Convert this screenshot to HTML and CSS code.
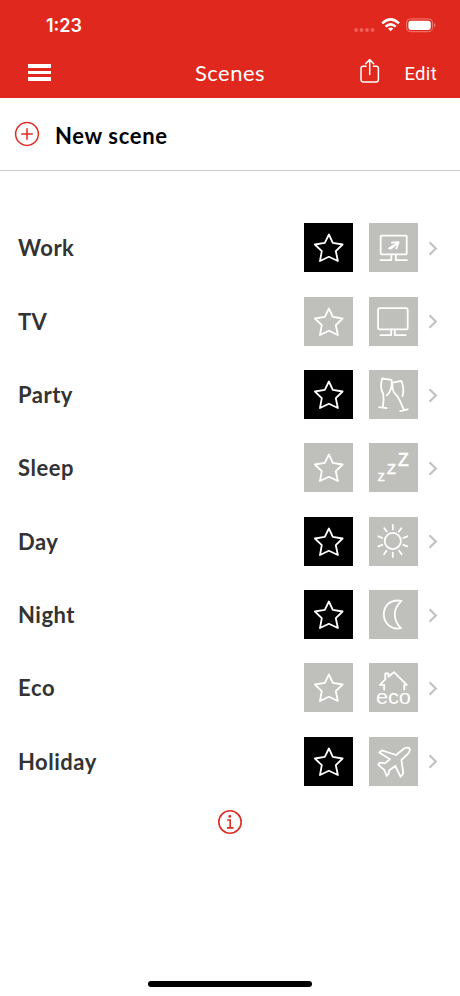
FILE: index.html
```
<!DOCTYPE html>
<html lang="en">
<head>
<meta charset="utf-8">
<title>Scenes</title>
<link rel="stylesheet" href="styles.css">
</head>
<body>
<svg class="defs" width="0" height="0" aria-hidden="true">
  <symbol id="star" viewBox="0 0 49 49"><path d="M24.9 11.5 28.8 19.9 38.6 21.5 31.8 28.2 33.9 38 24.9 33.8 16 38 17.8 28.2 10.9 21.5 20.8 19.9Z"/></symbol>
  <symbol id="chevron" viewBox="0 0 10 16"><path d="M1.5 2.3 7.8 8.5 1.5 14.7"/></symbol>
</svg>
<div class="screen">
  <header class="header">
    <div class="status">
      <span class="time">1:23</span>
      <svg class="signals" width="84" height="18" viewBox="0 0 84 18">
        <g fill="#f0605a"><circle cx="4" cy="14" r="1.9"/><circle cx="9.5" cy="14" r="1.9"/><circle cx="15" cy="14" r="1.9"/><circle cx="20.5" cy="14" r="1.9"/></g>
        <g fill="none" stroke="#fff" stroke-width="2.5"><path d="M30.2 7.3Q38.6-.5 47 7.3"/><path d="M33.5 10.6Q38.6 6.1 43.7 10.6"/></g>
        <path fill="#fff" d="M36 12.5Q38.6 10.4 41.3 12.5L38.6 15.3Z"/>
        <rect x="54.6" y="2.9" width="26" height="12.8" rx="4" fill="none" stroke="#f27d76"/>
        <rect x="56.4" y="4.7" width="22.4" height="9.2" rx="2.4" fill="#fff"/>
        <path d="M82 7.1Q84.6 9.3 82 11.5Z" fill="#f27d76"/>
      </svg>
    </div>
    <nav class="nav">
      <span class="menu"><i></i><i></i><i></i></span>
      <h1>Scenes</h1>
      <div class="actions">
        <svg width="22" height="26" viewBox="0 0 22 26"><path d="M7 8.3H4.2Q2 8.3 2 10.5V21.6Q2 24 4.4 24H17.2Q19.4 24 19.4 21.6V10.5Q19.4 8.3 17.2 8.3H14.4M10.7 16.6V2M6.7 5.7 10.7 1.6 14.7 5.7"/></svg>
        <span class="edit">Edit</span>
      </div>
    </nav>
  </header>
  <div class="new-scene">
    <svg width="26" height="26" viewBox="0 0 26 26"><circle cx="13" cy="13" r="11.4"/><path d="M13 7.2V18.8M7.2 13H18.8"/></svg>
    <span>New scene</span>
  </div>
  <main class="list">
    <div class="row"><span class="name">Work</span>
      <svg class="tile on"><use href="#star"/></svg>
      <svg class="tile" viewBox="0 0 49 49"><rect x="11.7" y="12.6" width="26" height="18.7" rx="1"/><path d="M11.3 37.1H22.3V31.3M38 37.1H26.8V31.3M22.9 19.6 29.6 19.2 27.4 25.5M20 25.6 28.6 20M22 25.6 28.6 20"/></svg>
      <svg class="chevron"><use href="#chevron"/></svg></div>
    <div class="row"><span class="name tv">TV</span>
      <svg class="tile"><use href="#star"/></svg>
      <svg class="tile" viewBox="0 0 49 49"><rect x="9.1" y="11.2" width="29.6" height="21.2" rx="1.5"/><path d="M11.4 38.1H22.2V32.4M36.8 38.1H25.8V32.4"/></svg>
      <svg class="chevron"><use href="#chevron"/></svg></div>
    <div class="row"><span class="name">Party</span>
      <svg class="tile on"><use href="#star"/></svg>
      <svg class="tile" viewBox="0 0 49 49"><path d="M13.2 8.5 22.6 9.8Q23.8 19.5 17.8 25.4M13.2 8.5C11.6 14 11.1 19 14.2 23.8Q15.2 30 13.8 37.4M10.1 37.1 17.7 38.2M23.3 12.6 32.4 10.8Q35.8 20 33.4 26.2M23.3 12.6Q23 21 26.7 24.5C30.3 27.2 32.2 34.5 35.2 40.2M31.2 41.2 38.7 39.3"/></svg>
      <svg class="chevron"><use href="#chevron"/></svg></div>
    <div class="row"><span class="name">Sleep</span>
      <svg class="tile"><use href="#star"/></svg>
      <svg class="tile letters" viewBox="0 0 49 49"><text x="8.8" y="37.6" font-size="11.3">Z</text><text x="17.9" y="30.5" font-size="14.5">Z</text><text x="28.9" y="23.1" font-size="17.5">Z</text></svg>
      <svg class="chevron"><use href="#chevron"/></svg></div>
    <div class="row"><span class="name">Day</span>
      <svg class="tile on"><use href="#star"/></svg>
      <svg class="tile" viewBox="0 0 49 49"><circle cx="23.8" cy="24" r="8.1"/><path d="M23.8 8V12.3M23.8 35.7V40M15.3 11.2 17.7 14.6M32.3 11.2 29.9 14.6M9.3 19.3 13.3 21M38.3 19.3 34.3 21M9.3 29.4 13.3 27.8M38.3 29.4 34.3 27.8M15 37.3 17.5 33.8M32.6 37.3 30.1 33.8"/></svg>
      <svg class="chevron"><use href="#chevron"/></svg></div>
    <div class="row"><span class="name">Night</span>
      <svg class="tile on"><use href="#star"/></svg>
      <svg class="tile" viewBox="0 0 49 49"><path d="M32.5 10.8C20.8 9 14.8 16 14.8 24.5S22.4 40.3 32 38.2Q25.8 32.2 25.8 24.5T32.5 10.8Z"/></svg>
      <svg class="chevron"><use href="#chevron"/></svg></div>
    <div class="row"><span class="name eco">Eco</span>
      <svg class="tile"><use href="#star"/></svg>
      <svg class="tile letters" viewBox="0 0 49 49"><path d="M15.2 26.6V21.8H10.8L16.3 16.4V10.3H19.4V13.8L24.9 9.2 37.8 21.8H35.3V26.6"/><text class="thin" x="6.9" y="40.6" font-size="19.5" textLength="35" lengthAdjust="spacingAndGlyphs">eco</text></svg>
      <svg class="chevron"><use href="#chevron"/></svg></div>
    <div class="row"><span class="name">Holiday</span>
      <svg class="tile on"><use href="#star"/></svg>
      <svg class="tile" viewBox="0 0 49 49"><path d="M27 18 34.5 12C37 10.3 39.6 10.4 40.4 11.3 41.2 12.6 40.6 14.8 39 16.8L32.4 23 34.3 36.5 31.5 39.7 26.3 29 20.3 33.2 19.5 36.8 17.7 39 15.5 33.2 9.2 27.6 11 25.6 15.7 26.4 21 22.3 10.2 15.6 12.8 13.4Z"/></svg>
      <svg class="chevron"><use href="#chevron"/></svg></div>
  </main>
  <svg class="info" width="26" height="26" viewBox="0 0 26 26"><circle cx="13" cy="13" r="11.2"/><circle class="dot" cx="12.8" cy="7.4" r="1.4"/><path d="M10.2 11H13.2V18.6M9.9 18.9H16.6"/></svg>
  <div class="home"></div>
</div>
</body>
</html>
```
FILE: styles.css
```
* { box-sizing: border-box; }
body { margin: 0; background: #fff; font-family: Lato, sans-serif; }
.defs { position: absolute; }
.screen { width: 460px; height: 996px; display: flex; flex-direction: column; overflow: hidden; }
.header { height: 98px; background: #e1281e; color: #fff; flex: none; }
.status { height: 48px; padding: 16px 24px 0 46px; display: flex; justify-content: space-between; }
.time { font: 600 18px/20px Inter, sans-serif; }
.nav { height: 49px; display: grid; grid-template-columns: 1fr auto 1fr; align-items: center; padding: 0 23px 0 23px; }
.menu { display: flex; flex-direction: column; gap: 3.2px; width: 23px; margin-left: 5px; }
.menu i { height: 3.6px; background: #fff; }
h1 { margin: 0; font-size: 22px; line-height: 28px; font-weight: 400; letter-spacing: .5px; }
.actions { display: flex; justify-content: flex-end; align-items: center; gap: 23px; }
.actions svg { fill: none; stroke: #fff; stroke-width: 1.5; stroke-linecap: round; stroke-linejoin: round; margin-bottom: 3px; }
.edit { font: 400 18.5px/24px Roboto, sans-serif; letter-spacing: .3px; padding-top: 2px; }
.new-scene { height: 73px; flex: none; border-bottom: 1px solid #ccc; display: flex; align-items: center; gap: 15px; padding-left: 14px; font-size: 22px; font-weight: 700; letter-spacing: .65px; color: #000; }
.new-scene span { padding-top: 2px; }
.new-scene svg { fill: none; stroke: #dc2d25; stroke-width: 1.5; }
.list { padding-top: 40.2px; flex: none; }
.row { height: 73.35px; display: flex; align-items: center; padding: 0 22px 0 18px; }
.name { flex: 1; font-size: 22px; font-weight: 700; letter-spacing: .5px; color: #333; }
.name.tv { letter-spacing: .3px; }
.name.eco { letter-spacing: .7px; }
.tile { width: 49px; height: 49px; margin-right: 15.4px; background: #bfc0bb; fill: none; stroke: #fff; stroke-width: 1.8; stroke-linejoin: round; stroke-linecap: round; }
.tile.on { background: #000; }
.letters text { font-family: "Liberation Sans", sans-serif; fill: #fff; stroke: #fff; stroke-width: .6; }
.letters .thin { stroke-width: 0; }
.chevron { width: 10px; height: 16px; margin-left: -5px; fill: none; stroke: #c2c2c2; stroke-width: 2.2; }
.info { align-self: center; margin-top: 11px; flex: none; fill: none; stroke: #dc2d25; stroke-width: 1.6; }
.info .dot { fill: #dc2d25; stroke: none; }
.home { width: 164px; height: 6px; border-radius: 3px; background: #000; margin: auto auto 9px; }
```
